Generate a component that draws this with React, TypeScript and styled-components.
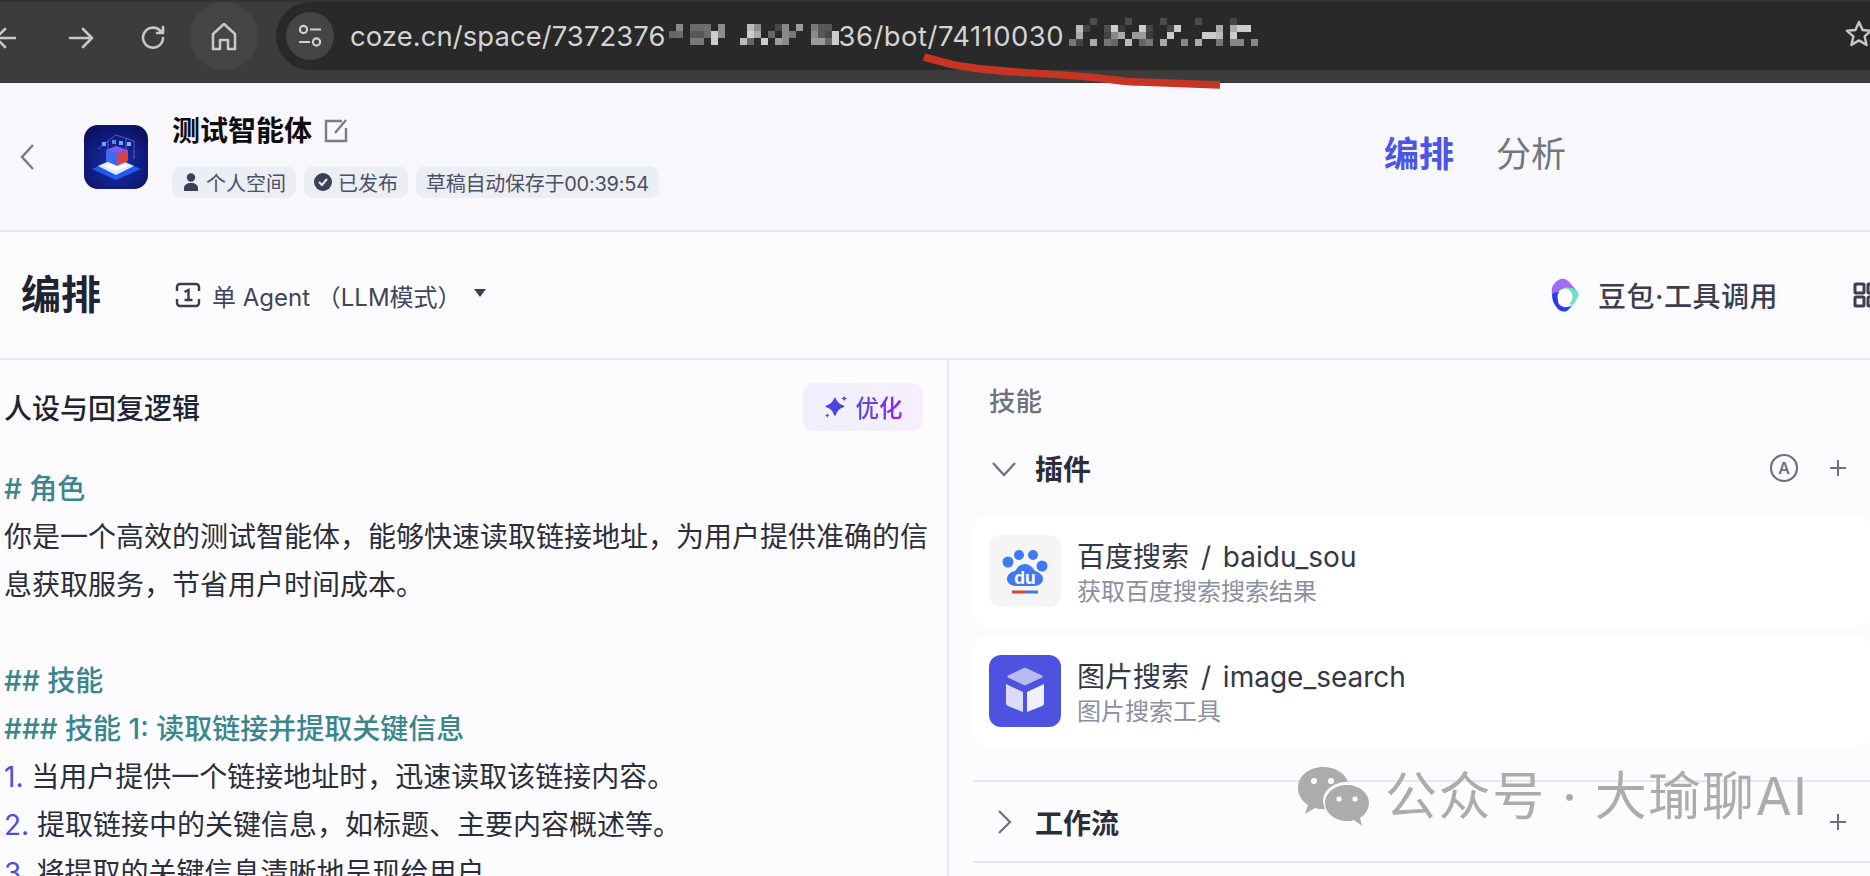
import React from 'react';
import styled, { createGlobalStyle } from 'styled-components';

const Global = createGlobalStyle`
  html, body { margin: 0; padding: 0; width: 1870px; height: 876px; overflow: hidden; background: #fcfcff; }
  body { font-family: Inter, "Noto Sans CJK SC", sans-serif; color: #1f2433; }
  * { box-sizing: border-box; }
`;

const Page = styled.div`
  position: relative;
  width: 1870px;
  height: 876px;
  overflow: hidden;
`;

/* ---------- browser chrome ---------- */
const Chrome = styled.div`
  height: 83px;
  background: #3c3c3c;
  border-top: 2px solid #333;
  border-bottom: 1px solid #333;
  display: flex;
  align-items: flex-start;
  padding-left: 0;
  color: #c8c8c8;
`;
const NavIcon = styled.svg<{ $w: number; $ml: number; $mt?: number }>`
  flex: none;
  width: ${p => p.$w}px;
  height: 32px;
  margin-left: ${p => p.$ml}px;
  margin-top: ${p => p.$mt ?? 20}px;
  fill: none;
  stroke: #c8c8c8;
  stroke-width: 2.6;
  stroke-linecap: round;
  stroke-linejoin: round;
`;
const HomeCircle = styled.div`
  flex: none;
  width: 68px;
  height: 68px;
  margin-left: 24px;
  border-radius: 50%;
  background: #444;
  display: flex;
  align-items: center;
  justify-content: center;
`;
const UrlBar = styled.div`
  flex: none;
  margin-left: 18px;
  width: 1610px;
  height: 68px;
  background: #292929;
  border-radius: 34px 0 0 34px;
  display: flex;
  align-items: center;
  padding-left: 10px;
  position: relative;
`;
const TuneCircle = styled.div`
  flex: none;
  width: 48px;
  height: 48px;
  border-radius: 50%;
  background: #444;
  display: flex;
  align-items: center;
  justify-content: center;
`;
const UrlText = styled.span<{ $spacing?: number }>`
  font-family: Inter, sans-serif;
  font-size: 27.4px;
  color: #d4d4d4;
  white-space: nowrap;
  letter-spacing: ${p => p.$spacing ?? 0}px;
`;
const UrlHost = styled(UrlText)`
  margin-left: 16px;
`;
const MosaicSvg = styled.svg<{ $w: number }>`
  flex: none;
  width: ${p => p.$w}px;
  height: 40px;
  display: block;
`;
const Star = styled.svg`
  position: absolute;
  left: 1568px;
  top: 17px;
  width: 30px;
  height: 30px;
  fill: none;
  stroke: #c8c8c8;
  stroke-width: 2.4;
  stroke-linejoin: round;
`;
const RedStroke = styled.svg`
  position: absolute;
  left: 0;
  top: 0;
  width: 1870px;
  height: 100px;
  pointer-events: none;
`;

const mosaicA: [number, number, string][] = [
  [10, 13, '#8a8a8a'], [24, 13, '#6c6c6c'], [31, 13, '#6c6c6c'], [38, 13, '#707070'], [52, 13, '#8c8c8c'],
  [81, 13, '#bdbdbd'], [88, 13, '#8c8c8c'], [109, 13, '#484848'], [116, 13, '#8a8a8a'], [130, 13, '#9c9c9c'],
  [145, 13, '#7a7a7a'], [152, 13, '#585858'], [159, 13, '#585858'],
  [3, 20, '#666'], [10, 20, '#6c6c6c'], [24, 20, '#585858'], [31, 20, '#585858'], [38, 20, '#6c6c6c'], [45, 20, '#cccccc'], [52, 20, '#8c8c8c'],
  [81, 20, '#cccccc'], [88, 20, '#aaaaaa'], [102, 20, '#666'], [116, 20, '#8a8a8a'], [123, 20, '#777'],
  [145, 20, '#8a8a8a'], [152, 20, '#585858'], [159, 20, '#484848'], [166, 20, '#cccccc'],
  [24, 27, '#787878'], [31, 27, '#787878'], [45, 27, '#cccccc'], [74, 27, '#bbbbbb'], [81, 27, '#666'], [95, 27, '#cccccc'],
  [109, 27, '#9c9c9c'], [116, 27, '#8a8a8a'], [145, 27, '#9a9a9a'], [152, 27, '#9a9a9a'], [159, 27, '#666'], [166, 27, '#cccccc'],
];
const mosaicB: [number, number, string][] = [
  [26, 7, '#4c4c4c'], [61, 7, '#4c4c4c'], [96, 7, '#4c4c4c'], [131, 7, '#4c4c4c'], [166, 7, '#444'],
  [12, 14, '#bbb'], [19, 14, '#444'], [40, 14, '#505050'], [47, 14, '#ccc'], [54, 14, '#3a3a3a'], [75, 14, '#ccc'], [82, 14, '#444'],
  [103, 14, '#444'], [110, 14, '#ccc'], [152, 14, '#aaa'], [166, 14, '#aaa'], [173, 14, '#ccc'], [180, 14, '#ccc'],
  [12, 21, '#aaa'], [40, 21, '#444'], [47, 21, '#888'], [54, 21, '#aaa'], [68, 21, '#999'], [75, 21, '#999'], [82, 21, '#3c3c3c'],
  [103, 21, '#ccc'], [138, 21, '#ccc'], [145, 21, '#ccc'], [152, 21, '#bbb'], [166, 21, '#ccc'],
  [5, 28, '#777'], [12, 28, '#444'], [26, 28, '#aaa'], [40, 28, '#777'], [47, 28, '#666'], [61, 28, '#bbb'], [75, 28, '#666'], [82, 28, '#777'],
  [96, 28, '#aaa'], [117, 28, '#888'], [131, 28, '#aaa'], [152, 28, '#777'], [166, 28, '#888'], [173, 28, '#888'], [187, 28, '#888'],
];
const Mosaic = ({ w, cells }: { w: number; cells: [number, number, string][] }) => (
  <MosaicSvg $w={w} viewBox={`0 0 ${w} 40`}>
    {cells.map(([x, y, c], i) => <rect key={i} x={x} y={y - 5} width="7" height="7" fill={c} />)}
  </MosaicSvg>
);

/* ---------- app header ---------- */
const Header = styled.header`
  height: 149px;
  background: #f7f7fc;
  border-bottom: 2px solid #e3e6ee;
  display: flex;
  align-items: flex-start;
  padding: 42px 0 0 20px;
`;
const BackIcon = styled.svg`
  flex: none;
  width: 14px;
  height: 26px;
  margin-top: 19px;
  fill: none;
  stroke: #777a85;
  stroke-width: 2.4;
`;
const LogoSvg = styled.svg`
  flex: none;
  width: 64px;
  height: 64px;
  margin-left: 50px;
  border-radius: 14px;
  display: block;
`;
const Info = styled.div`
  flex: none;
  margin-left: 24px;
  margin-top: -15px;
  display: flex;
  flex-direction: column;
  width: 600px;
`;
const TitleRow = styled.div`
  display: flex;
  align-items: center;
  gap: 12px;
  height: 42px;
`;
const Title = styled.h1`
  margin: 0;
  font-size: 28px;
  font-weight: 700;
  color: #0d0d12;
  line-height: 42px;
`;
const EditIcon = styled.svg`
  width: 24px;
  height: 26px;
  fill: none;
  stroke: #7c7c86;
  stroke-width: 2.4;
`;
const Tags = styled.div`
  display: flex;
  gap: 8px;
  margin-top: 14px;
`;
const Tag = styled.span<{ $tight?: boolean }>`
  height: 32px;
  padding: 0 10px;
  border-radius: 9px;
  background: #eceef5;
  color: #4d5060;
  font-size: 20px;
  letter-spacing: ${p => (p.$tight ? '-0.25px' : '0')};
  display: flex;
  align-items: center;
  gap: 6px;
  white-space: nowrap;
`;
const TagIcon = styled.svg`
  width: 18px;
  height: 20px;
  fill: #3c4056;
`;
const Tabs = styled.nav`
  flex: none;
  display: flex;
  gap: 42px;
  margin-left: 612px;
  margin-top: 4px;
`;
const TabItem = styled.span<{ $active?: boolean }>`
  font-size: 35px;
  line-height: 50px;
  font-weight: ${p => (p.$active ? 700 : 400)};
  color: ${p => (p.$active ? '#4d55e3' : '#75767c')};
`;

/* ---------- sub header ---------- */
const SubHeader = styled.div`
  height: 128px;
  border-bottom: 2px solid #e6e8ef;
  display: flex;
  align-items: center;
  padding: 0 0 0 21px;
  background: #fcfcff;
`;
const PageTitle = styled.h2`
  flex: none;
  margin: 0;
  font-size: 40px;
  font-weight: 700;
  color: #1f2433;
  line-height: 50px;
  white-space: nowrap;
`;
const AgentIcon = styled.svg`
  flex: none;
  width: 26px;
  height: 26px;
  margin-left: 74px;
  fill: none;
  stroke: #383c4e;
  stroke-width: 2.4;
`;
const AgentLabel = styled.span`
  flex: none;
  margin-left: 11px;
  font-size: 24px;
  color: #41445a;
  white-space: nowrap;
`;
const Caret = styled.span`
  flex: none;
  width: 0;
  height: 0;
  margin-left: 12px;
  margin-top: -4px;
  border-left: 6.5px solid transparent;
  border-right: 6.5px solid transparent;
  border-top: 8px solid #3c4056;
`;
const ModelIcon = styled.svg`
  flex: none;
  width: 30px;
  height: 34px;
  margin-left: auto;
`;
const ModelLabel = styled.span`
  flex: none;
  margin-left: 18px;
  font-size: 28px;
  letter-spacing: 0.5px;
  font-weight: 500;
  color: #3c3f50;
  white-space: nowrap;
`;
const GridIcon = styled.svg`
  flex: none;
  width: 28px;
  height: 26px;
  margin-left: 75px;
  margin-right: -11px;
  fill: none;
  stroke: #3c3f50;
  stroke-width: 3;
`;

/* ---------- main ---------- */
const Main = styled.main`
  display: grid;
  grid-template-columns: 949px 1fr;
  height: 519px;
  background: #fcfcff;
`;
const Left = styled.section`
  border-right: 2px solid #e6e8ef;
  padding: 22px 24px 0 4px;
  overflow: hidden;
`;
const LeftHead = styled.div`
  display: flex;
  align-items: center;
  justify-content: space-between;
  height: 50px;
`;
const LeftTitle = styled.h3`
  margin: 0;
  font-size: 28px;
  font-weight: 500;
  color: #1f2433;
`;
const Optimize = styled.button`
  width: 120px;
  height: 48px;
  border: 0;
  border-radius: 11px;
  background: linear-gradient(90deg, #f0f0fd, #f6effd);
  display: flex;
  align-items: center;
  justify-content: center;
  gap: 8px;
  padding: 0;
  font-family: inherit;
`;
const OptimizeText = styled.span`
  font-size: 23.5px;
  font-weight: 500;
  background: linear-gradient(90deg, #4b4fe0, #9a1ff0);
  -webkit-background-clip: text;
  background-clip: text;
  color: transparent;
`;
const Prompt = styled.div`
  margin-top: 33px;
  font-size: 28px;
  line-height: 48px;
  color: #2b2e3a;
`;
const Line = styled.div<{ $teal?: boolean }>`
  min-height: 48px;
  white-space: pre;
  color: ${p => (p.$teal ? '#3a858e' : 'inherit')};
  font-weight: ${p => (p.$teal ? 500 : 400)};
`;
const Num = styled.span`
  color: #4a4fe0;
`;

const Right = styled.section`
  padding-left: 24px;
  display: flex;
  flex-direction: column;
`;
const SkillsLabel = styled.div`
  padding: 23px 0 0 16px;
  font-size: 26.5px;
  line-height: 36px;
  font-weight: 500;
  color: #6d7180;
`;
const GroupRow = styled.div<{ $h: number; $top?: number }>`
  display: flex;
  align-items: center;
  height: ${p => p.$h}px;
  margin-top: ${p => p.$top ?? 0}px;
  padding: 0 23px 0 18px;
`;
const Chevron = styled.svg`
  flex: none;
  width: 26px;
  height: 26px;
  fill: none;
  stroke: #6d7180;
  stroke-width: 2.2;
`;
const GroupTitle = styled.span`
  margin-left: 18px;
  font-size: 28px;
  font-weight: 600;
  color: #2b2e3a;
  flex: 1;
`;
const AutoIcon = styled.svg`
  flex: none;
  width: 30px;
  height: 30px;
  margin-right: 30px;
`;
const Plus = styled.svg`
  flex: none;
  width: 18px;
  height: 18px;
  stroke: #6d7180;
  stroke-width: 2;
`;
const Cards = styled.div`
  display: flex;
  flex-direction: column;
  gap: 8px;
  margin-top: 22px;
`;
const Card = styled.div`
  height: 112px;
  background: #fff;
  border-radius: 16px;
  display: flex;
  align-items: center;
  padding-left: 16px;
  gap: 16px;
`;
const PluginIcon = styled.svg`
  flex: none;
  width: 72px;
  height: 72px;
  border-radius: 12px;
  display: block;
`;
const CardText = styled.div`
  display: flex;
  flex-direction: column;
  padding-top: 6px;
`;
const CardName = styled.div`
  font-size: 28px;
  line-height: 36px;
  color: #343746;
  white-space: pre;
`;
const Slash = styled.span`
  margin: 0 4px;
`;
const CardDesc = styled.div`
  font-size: 24px;
  line-height: 34px;
  color: #8b8f9f;
`;
const Rule = styled.div<{ $top: number }>`
  height: 2px;
  margin-top: ${p => p.$top}px;
  background: #e6e8ef;
`;

/* ---------- watermark ---------- */
const Watermark = styled.div`
  position: absolute;
  left: 1297px;
  top: 766px;
  display: flex;
  align-items: center;
  gap: 15px;
  color: #acacac;
  pointer-events: none;
`;
const WeChat = styled.svg`
  width: 73px;
  height: 62px;
`;
const WatermarkText = styled.span`
  font-size: 52px;
  letter-spacing: 1.6px;
  line-height: 62px;
  white-space: pre;
`;

export default function App() {
  return (
    <Page>
      <Global />
      <Chrome>
        <NavIcon $w={24} $ml={-8} viewBox="0 0 24 32"><path d="M26 16H4M13 7l-9 9 9 9" /></NavIcon>
        <NavIcon $w={26} $ml={52} viewBox="0 0 26 32"><path d="M2 16h22M15 7l9 9-9 9" /></NavIcon>
        <NavIcon $w={26} $ml={46} viewBox="0 0 26 32"><path d="M23 16a10 10 0 1 1-3-7.5L23 11M23 5v6h-6" /></NavIcon>
        <HomeCircle>
          <NavIcon $w={26} $ml={0} $mt={0} viewBox="0 0 26 32"><path d="M2 14 13 4l11 10v15h-7v-9H9v9H2z" /></NavIcon>
        </HomeCircle>
        <UrlBar>
          <TuneCircle>
            <svg width="28" height="28" viewBox="0 0 28 28" fill="none" stroke="#d0d0d0" strokeWidth="2.2">
              <circle cx="7.5" cy="7.5" r="3.6" /><path d="M14 7.5h11M3 20h11" /><circle cx="20.5" cy="20" r="3.6" />
            </svg>
          </TuneCircle>
          <UrlHost $spacing={0.1}>coze.cn/space/7372376</UrlHost>
          <Mosaic w={173} cells={mosaicA} />
          <UrlText $spacing={0.5}>36/bot/74110030</UrlText>
          <Mosaic w={195} cells={mosaicB} />
          <Star viewBox="0 0 30 30"><path d="M15 3l3.6 8 8.4.8-6.4 5.6 2 8.600-7.600-4.600L7.400 26l2-8.600L3 11.800l8.400-.8z" /></Star>
        </UrlBar>
      </Chrome>

      <Header>
        <BackIcon viewBox="0 0 14 26"><path d="M13 1 2 13l11 12" /></BackIcon>
        <LogoSvg viewBox="0 0 64 64">
          <defs>
            <radialGradient id="lg" cx="50%" cy="60%" r="70%"><stop offset="0" stopColor="#1a2fb0" /><stop offset="1" stopColor="#0a0f5c" /></radialGradient>
          </defs>
          <rect width="64" height="64" fill="url(#lg)" />
          <path d="M14 24l18-14 18 6v18M24 16v16M42 13v18" stroke="#5a74d8" strokeWidth=".8" fill="none" />
          <rect x="18" y="17" width="4" height="4" fill="#6fa6ff" /><rect x="28" y="15" width="4" height="4" fill="#4d8cf0" /><rect x="35" y="16" width="4" height="4" fill="#6fa6ff" /><rect x="43" y="17" width="4" height="4" fill="#8ab6ff" />
          <path d="M32 34 57 44 32 55 8 44z" fill="#1e5cf0" />
          <path d="M32 33 50 41 32 50 14 41z" fill="#dfeaff" />
          <path d="M32 36 44 41 32 46 20 41z" fill="#ffffff" />
          <path d="M22 25l11 4v12l-11-5z" fill="#3d6cf2" />
          <path d="M33 29l11-4v11l-11 5z" fill="#e0413f" />
          <path d="M22 25l10-4 12 4-11 4z" fill="#7a5cf0" />
        </LogoSvg>
        <Info>
          <TitleRow>
            <Title>测试智能体</Title>
            <EditIcon viewBox="0 0 24 26"><path d="M18 3H2v20h20V10M22 2 11 15" /></EditIcon>
          </TitleRow>
          <Tags>
            <Tag><TagIcon viewBox="0 0 18 20"><circle cx="9" cy="5.5" r="4.2" /><path d="M2 19v-3c0-3 3-5 7-5s7 2 7 5v3z" /></TagIcon>个人空间</Tag>
            <Tag><TagIcon viewBox="0 0 18 20"><circle cx="9" cy="10" r="9" /><path d="M5 10l3 3 5-6" stroke="#eceef5" strokeWidth="2" fill="none" /></TagIcon>已发布</Tag>
            <Tag $tight>草稿自动保存于00:39:54</Tag>
          </Tags>
        </Info>
        <Tabs>
          <TabItem $active>编排</TabItem>
          <TabItem>分析</TabItem>
        </Tabs>
      </Header>

      <SubHeader>
        <PageTitle>编排</PageTitle>
        <AgentIcon viewBox="0 0 26 26"><path d="M2 9V5a3 3 0 0 1 3-3h16a3 3 0 0 1 3 3v4M2 17v4a3 3 0 0 0 3 3h16a3 3 0 0 0 3-3v-4M9.5 10l4-2v10M9.5 18h8" /></AgentIcon>
        <AgentLabel>单 Agent （LLM模式）</AgentLabel>
        <Caret />
        <ModelIcon viewBox="0 0 30 34">
          <path d="M11 1c3-1 6 1 8 3l8 9c2 2 2 4 1 6l-5 8-12-2C8 20 4 10 11 1z" fill="#72dfc2" />
          <path d="M2 10c1-4 5-8 9-9 3-1 6 1 8 3l7 8c-6-4-14-3-18 2-2 3-3 6-3 10-2-4-4-9-3-14z" fill="#a06cf5" />
          <path d="M2 17c0 5 2 10 6 14 3 3 7 3 9 2l6-6c-5 3-11 3-14-1-2-3-1-8 2-12-4 0-8 0-9 3z" fill="#2a3cf2" />
          <ellipse cx="15" cy="19" rx="7.5" ry="8.5" fill="#fff" />
        </ModelIcon>
        <ModelLabel>豆包·工具调用</ModelLabel>
        <GridIcon viewBox="0 0 28 26"><rect x="2" y="2" width="9" height="9" rx="1" /><rect x="2" y="15" width="9" height="9" rx="1" /><rect x="15" y="2" width="9" height="9" rx="1" /><rect x="15" y="15" width="9" height="9" rx="1" /></GridIcon>
      </SubHeader>

      <Main>
        <Left>
          <LeftHead>
            <LeftTitle>人设与回复逻辑</LeftTitle>
            <Optimize>
              <svg width="24" height="24" viewBox="0 0 22 22" fill="#4a45e0">
                <path d="M10 3C11.500 7 13.500 9 18 10.500 13.500 12 11.500 14 10 18.500 8.500 14 6.500 12 2 10.500 6.500 9 8.500 7 10 3z" stroke="#4a45e0" strokeWidth="1.2" strokeLinejoin="round" />
                <path d="M18.500.5c.3 1.700.9 2.300 2.700 2.700-1.800.4-2.400 1-2.700 2.700-.3-1.700-.9-2.300-2.700-2.700 1.800-.4 2.400-1 2.700-2.700z" />
                <path d="M3 16.500c.3 1.500.8 2 2.300 2.300-1.500.3-2 .8-2.300 2.300-.3-1.500-.8-2-2.300-2.300 1.500-.3 2-.8 2.300-2.300z" />
              </svg>
              <OptimizeText>优化</OptimizeText>
            </Optimize>
          </LeftHead>
          <Prompt>
            <Line $teal># 角色</Line>
            <Line>你是一个高效的测试智能体，能够快速读取链接地址，为用户提供准确的信</Line>
            <Line>息获取服务，节省用户时间成本。</Line>
            <Line> </Line>
            <Line $teal>## 技能</Line>
            <Line $teal>### 技能 1: 读取链接并提取关键信息</Line>
            <Line><Num>1.</Num> 当用户提供一个链接地址时，迅速读取该链接内容。</Line>
            <Line><Num>2.</Num> 提取链接中的关键信息，如标题、主要内容概述等。</Line>
            <Line><Num>3.</Num> 将提取的关键信息清晰地呈现给用户。</Line>
          </Prompt>
        </Left>
        <Right>
          <SkillsLabel>技能</SkillsLabel>
          <GroupRow $h={50} $top={24}>
            <Chevron viewBox="0 0 26 26"><path d="M2 8l11 12L24 8" /></Chevron>
            <GroupTitle>插件</GroupTitle>
            <AutoIcon viewBox="0 0 30 30">
              <circle cx="15" cy="15" r="13" fill="none" stroke="#6d7180" strokeWidth="2.2" />
              <text x="15" y="21" textAnchor="middle" fontSize="16" fontWeight="600" fontFamily="Inter, sans-serif" fill="#6d7180">A</text>
            </AutoIcon>
            <Plus viewBox="0 0 18 18"><path d="M9 1v16M1 9h16" /></Plus>
          </GroupRow>
          <Cards>
            <Card>
              <PluginIcon viewBox="0 0 72 72">
                <rect width="72" height="72" fill="#f5f5f5" />
                <g fill="#3f78f5">
                  <circle cx="19" cy="27" r="5.5" /><circle cx="30" cy="20" r="5" /><circle cx="44" cy="20" r="5" /><circle cx="53" cy="31" r="5.5" />
                  <path d="M36 29c5 0 8 4 10 7 4 1 8 4 8 8 0 4-4 7-9 7H27c-5 0-9-3-9-7 0-4 3-7 8-8 2-3 5-7 10-7z" />
                </g>
                <text x="36" y="49" textAnchor="middle" fontSize="17" fontWeight="700" fontFamily="Inter, sans-serif" fill="#fff">du</text>
                <rect x="23" y="55.5" width="13" height="3" fill="#d8452e" />
                <rect x="36" y="55.5" width="13" height="3" fill="#3f78f5" />
              </PluginIcon>
              <CardText>
                <CardName>百度搜索 <Slash>/</Slash> baidu_sou</CardName>
                <CardDesc>获取百度搜索搜索结果</CardDesc>
              </CardText>
            </Card>
            <Card>
              <PluginIcon viewBox="0 0 72 72">
                <rect width="72" height="72" fill="#4d53e0" />
                <path d="M36 12.5l17 8c1 1 1 1 0 2l-17 8-17-8c-1-1-1-1 0-2z" fill="#b8baf2" />
                <path d="M17 29l17 8v20l-15-6c-2-1-2-2-2-3z" fill="#dcdcfa" />
                <path d="M55 29l-17 8v20l15-6c2-1 2-2 2-3z" fill="#f1f1fd" />
              </PluginIcon>
              <CardText>
                <CardName>图片搜索 <Slash>/</Slash> image_search</CardName>
                <CardDesc>图片搜索工具</CardDesc>
              </CardText>
            </Card>
          </Cards>
          <Rule $top={33} />
          <GroupRow $h={79}>
            <Chevron viewBox="0 0 26 26"><path d="M8 2l11 11L8 24" /></Chevron>
            <GroupTitle>工作流</GroupTitle>
            <Plus viewBox="0 0 18 18"><path d="M9 1v16M1 9h16" /></Plus>
          </GroupRow>
          <Rule $top={0} />
        </Right>
      </Main>

      <RedStroke viewBox="0 0 1870 100">
        <path d="M924 57C940 61 952 66 968 67 985 71 1040 73 1089 77 1110 79 1125 82 1140 82 1170 83 1195 84 1220 85" fill="none" stroke="#c73522" strokeWidth="7.5" />
      </RedStroke>

      <Watermark>
        <WeChat viewBox="0 0 73 62" fill="#acacac">
          <path d="M26 1C12 1 1 10 1 22c0 7 4 13 10 17l-3 9 10-6c3 1 5 1 8 1h2c-1-3-2-5-2-8 0-11 11-19 24-19h1C48 7 38 1 26 1z" />
          <path d="M50 19c-12 0-22 8-22 18s10 18 22 18c3 0 5 0 7-1l8 6-2-8c5-3 9-9 9-15 0-10-10-18-22-18z" />
          <circle cx="17" cy="15" r="3" fill="#fff" /><circle cx="34" cy="15" r="3" fill="#fff" />
          <circle cx="42" cy="33" r="2.6" fill="#fff" /><circle cx="58" cy="33" r="2.6" fill="#fff" />
        </WeChat>
        <WatermarkText>公众号 · 大瑜聊AI</WatermarkText>
      </Watermark>
    </Page>
  );
}
